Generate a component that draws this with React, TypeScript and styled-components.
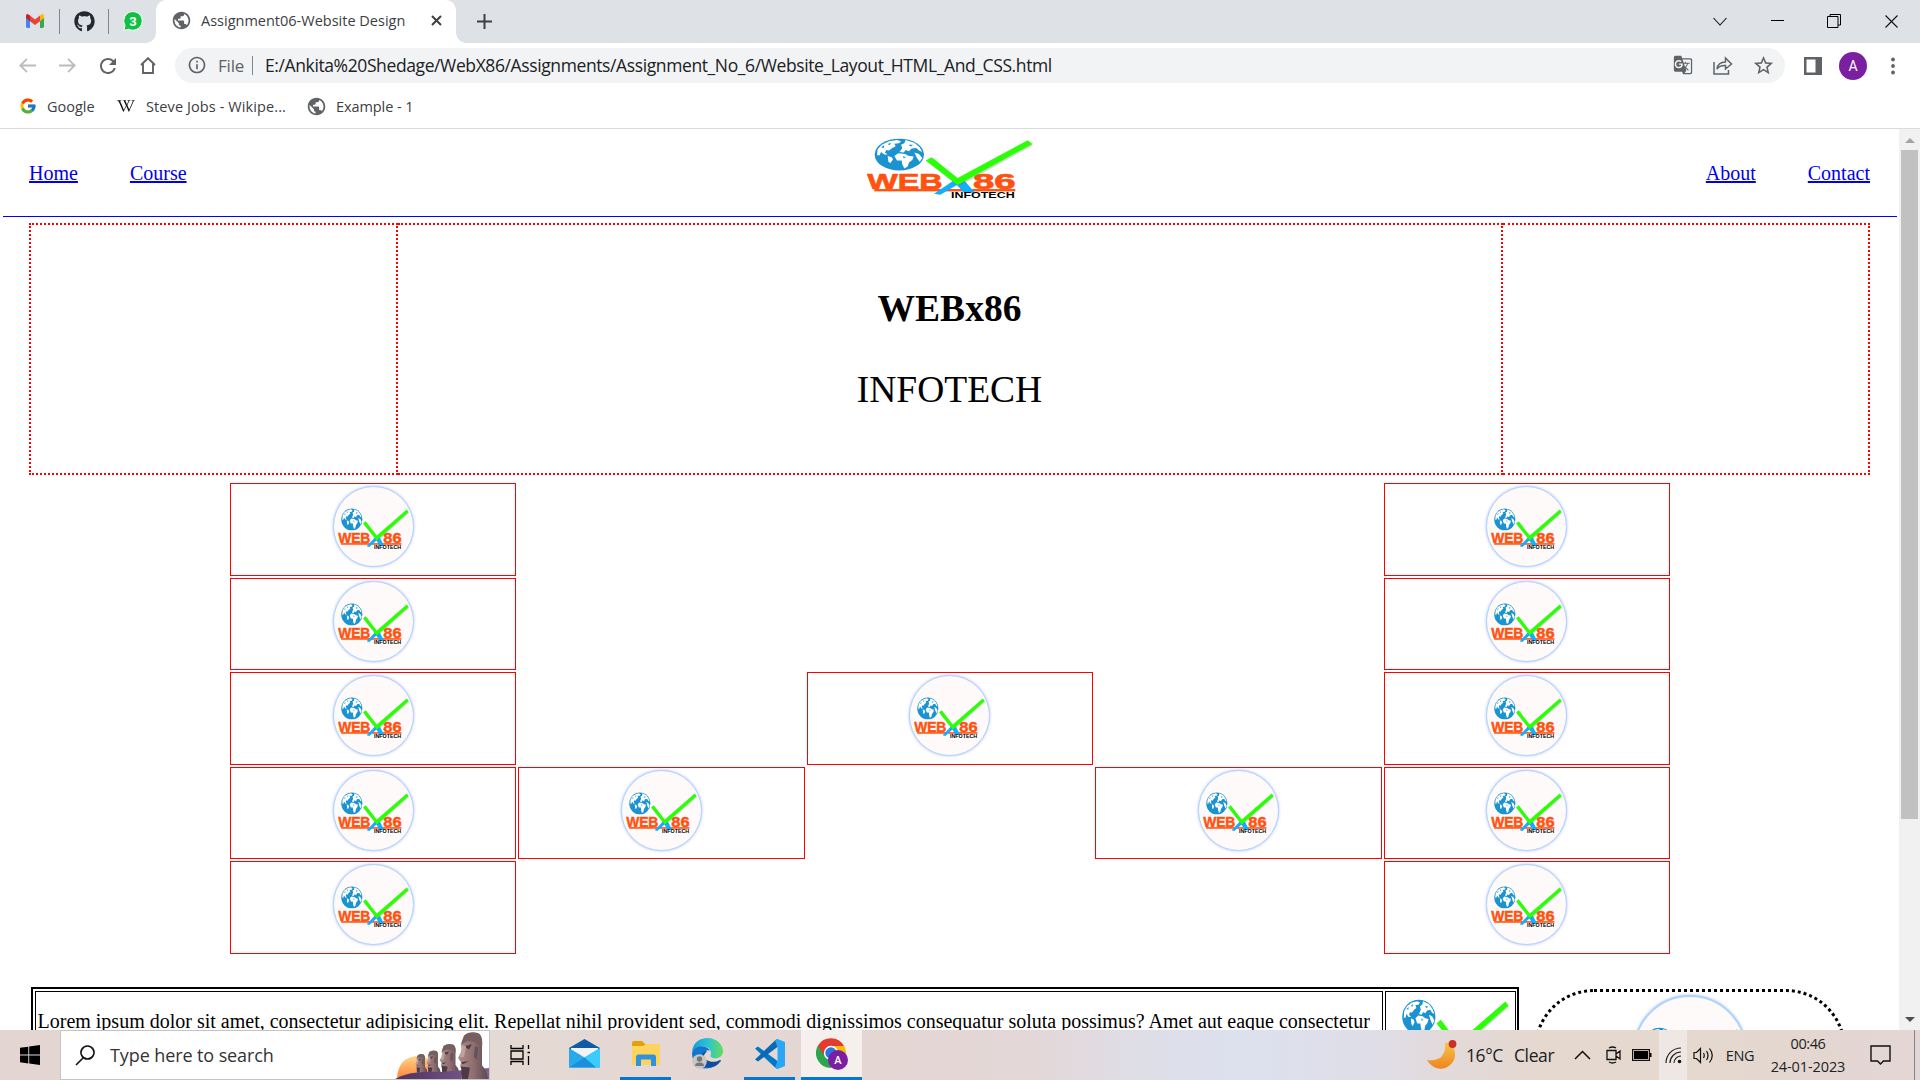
import React from "react";
import styled, { createGlobalStyle } from "styled-components";
import { FaGithub, FaWikipediaW } from "react-icons/fa";
import { FcGoogle } from "react-icons/fc";
import { MdPublic, MdRefresh, MdInfoOutline, MdStarBorder, MdGTranslate } from "react-icons/md";

const serif = `"Liberation Serif", "Times New Roman", serif`;
const sans = `"Open Sans", "Noto Sans", sans-serif`;

const Global = createGlobalStyle`
  *, *::before, *::after { box-sizing: border-box; }
  html, body { margin: 0; padding: 0; background: #fff; overflow: hidden; }
  svg { display: block; flex: none; }
`;

const Screen = styled.div`
  width: 1920px;
  height: 1080px;
  display: flex;
  flex-direction: column;
  overflow: hidden;
  background: #fff;
`;

/* ---------- browser chrome ---------- */

const Row = styled.div<{ $h: number; $pl?: number }>`
  height: ${(p) => p.$h}px;
  padding-left: ${(p) => p.$pl ?? 0}px;
  display: flex;
  align-items: center;
  flex: none;
`;

const TabStrip = styled(Row)`
  background: #dee1e6;
  color: #3c4043;
  padding-bottom: 1px;
`;

const Cell = styled.div<{ $w: number; $bg?: string }>`
  width: ${(p) => p.$w}px;
  height: 100%;
  flex: none;
  display: flex;
  align-items: center;
  justify-content: center;
  background: ${(p) => p.$bg ?? "transparent"};
`;

const Label = styled.span<{ $size: number; $ls?: number; $w?: number; $color?: string }>`
  font-family: ${sans};
  font-size: ${(p) => p.$size}px;
  letter-spacing: ${(p) => p.$ls ?? 0}px;
  width: ${(p) => (p.$w ? `${p.$w}px` : "auto")};
  color: ${(p) => p.$color ?? "#3c4043"};
  white-space: nowrap;
  flex: none;
`;

const Divider = styled.span<{ $h: number }>`
  width: 1px;
  height: ${(p) => p.$h}px;
  background: #80868b;
  flex: none;
`;

const ActiveTab = styled.div`
  position: relative;
  width: 300px;
  height: 43px;
  align-self: flex-start;
  padding-left: 15px;
  display: flex;
  flex: none;
  align-items: center;
  padding-bottom: 2px;
  background: #fff;
  border-radius: 10px 10px 0 0;
  &::before, &::after {
    content: "";
    position: absolute;
    bottom: 0;
    width: 10px;
    height: 10px;
  }
  &::before { left: -10px; background: radial-gradient(circle at 0 0, #dee1e6 9.5px, #fff 10px); }
  &::after { right: -10px; background: radial-gradient(circle at 100% 0, #dee1e6 9.5px, #fff 10px); }
`;

const Push = styled.div`
  flex: 1;
`;

const Toolbar = styled(Row)`
  padding-bottom: 1px;
  color: #5f6368;
`;

const Omnibox = styled.div`
  width: 1610px;
  height: 35px;
  border-radius: 18px;
  background: #f1f3f4;
  display: flex;
  align-items: center;
  padding: 0 2px 1px 12px;
  flex: none;
`;

const Avatar = styled.div`
  width: 28px;
  height: 28px;
  border-radius: 50%;
  background: #7b1fa2;
  color: #fff;
  font: 14px Roboto, sans-serif;
  display: flex;
  align-items: center;
  justify-content: center;
`;

const Bookmarks = styled(Row)`
  padding-bottom: 5px;
  border-bottom: 1px solid #dadce0;
`;

/* ---------- page ---------- */

const Viewport = styled.div`
  height: 901px;
  display: flex;
  overflow: hidden;
  flex: none;
`;

const Page = styled.main`
  width: 1899px;
  height: 901px;
  overflow: hidden;
  font-family: ${serif};
  font-size: 20px;
  color: #000;
`;

const Scrollbar = styled.div`
  width: 21px;
  background: #f1f1f1;
  display: flex;
  flex-direction: column;
  align-items: center;
  padding: 9px 0 8px;
  justify-content: space-between;
`;

const Thumb = styled.div`
  width: 17px;
  height: 669px;
  margin-top: 7px;
  background: #c1c1c1;
`;

const Nav = styled.nav`
  height: 88px;
  margin: 0 2px 6px 3px;
  padding: 0 27px 0 26px;
  border-bottom: 1px solid #00f;
  display: grid;
  grid-template-columns: 1fr 166px 1fr;
  align-items: center;
`;

const Brand = styled.div`
  align-self: start;
  padding-top: 9px;
`;

const Links = styled.div<{ $end?: boolean }>`
  display: flex;
  gap: 52px;
  padding-top: 1px;
  justify-content: ${(p) => (p.$end ? "flex-end" : "flex-start")};
`;

const Link = styled.a`
  color: #00e;
  text-decoration: underline;
  text-decoration-thickness: 2px;
  text-underline-offset: 1px;
`;

const Banner = styled.table`
  width: 1841px;
  height: 252px;
  margin: 0 0 8px 29px;
  border-collapse: collapse;
  table-layout: fixed;
  td {
    border: 2px dotted red;
    padding: 0;
    text-align: center;
    vertical-align: middle;
  }
`;

const Title = styled.h1`
  margin: 0 0 38px;
  font-size: 37.5px;
  line-height: 43px;
`;

const Subtitle = styled.p`
  margin: 0;
  font-size: 37.5px;
  line-height: 43px;
`;

const LogoGrid = styled.section`
  margin: 0 0 33px 230px;
  width: 1440px;
  display: grid;
  grid-template-columns: repeat(5, 1fr);
  grid-template-rows: repeat(5, 92.6px);
  gap: 2px;
`;

const LogoBox = styled.div<{ $col: number; $row: number }>`
  grid-column: ${(p) => p.$col};
  grid-row: ${(p) => p.$row};
  border: 1px solid red;
  display: flex;
  justify-content: center;
  padding-top: 2px;
`;

const Disc = styled.div<{ $d: number }>`
  width: ${(p) => p.$d}px;
  height: ${(p) => p.$d}px;
  border-radius: 50%;
  border: ${(p) => p.$d / 55}px solid #a9d6fb;
  box-shadow: 0 0 3px #b9b9ff;
  background: #fffafa;
  display: flex;
  justify-content: center;
  padding-top: ${(p) => p.$d * 0.26}px;
  flex: none;
`;

const Lower = styled.div`
  display: flex;
  align-items: flex-start;
  padding-left: 31px;
`;

const TextTable = styled.div`
  width: 1488px;
  height: 160px;
  border: 2px solid #000;
  padding: 2px 2px;
  display: grid;
  grid-template-columns: 1348px 131px;
  gap: 2px;
  flex: none;
`;

const TableCell = styled.div`
  border: 1px solid #000;
  overflow: hidden;
  white-space: nowrap;
`;

const Paragraph = styled.p`
  margin: 18px 0 0 1.5px;
  line-height: 23px;
`;

const LogoHolder = styled.div`
  padding: 7px 0 0 11px;
`;

const RoundCard = styled.div`
  width: 312px;
  height: 300px;
  margin: 2px 0 0 15px;
  border: 3px dotted #000;
  border-radius: 60px;
  display: flex;
  justify-content: center;
  align-items: flex-start;
  padding-top: 3px;
`;

/* ---------- taskbar ---------- */

const Taskbar = styled.footer`
  height: 50px;
  display: flex;
  align-items: center;
  flex: none;
  background: linear-gradient(90deg, #e3d5d2 0, #e5d9d4 500px, #e4d6d3 900px, #e3d7d8 1030px, #dddfea 1170px, #dde1ee 1250px, #dfdee8 1370px, #e2d9d9 1450px, #e5d8ce 1550px, #e5d8ce 1700px, #e3d6d4 1920px);
`;

const Search = styled.div`
  width: 430px;
  height: 50px;
  border: 1px solid #c6c3c3;
  background: #fff;
  display: flex;
  align-items: center;
  padding-left: 14px;
  flex: none;
`;

const AppButton = styled.div<{ $w: number; $open?: boolean; $active?: boolean; $ml?: number }>`
  width: ${(p) => p.$w}px;
  margin-left: ${(p) => p.$ml ?? 0}px;
  height: 50px;
  border-bottom: 3px solid ${(p) => (p.$open ? "#0078d7" : "transparent")};
  background: ${(p) => (p.$active ? "#f5f0ee" : "transparent")};
  background-clip: padding-box;
  display: flex;
  align-items: center;
  justify-content: center;
  flex: none;
`;

const Clock = styled.div`
  width: 84px;
  display: flex;
  flex-direction: column;
  align-items: center;
  line-height: 23px;
  flex: none;
`;

/* ---------- drawings ---------- */

const Logo = ({ w, h }: { w: number; h: number }) => (
  <svg width={w} height={h} viewBox="80 40 498 184" preserveAspectRatio="none">
    <ellipse cx="177" cy="90" rx="74" ry="48" fill="#1b93d0" />
    <g fill="#fff">
      <path d="M112 74 L124 60 L146 50 L170 46 L182 50 L176 56 L162 57 L166 65 L156 70 L146 78 L138 76 L134 84 L142 90 L132 90 L122 82 L118 92 L110 92Z" />
      <path d="M196 46 L222 54 L238 68 L246 82 L236 78 L228 70 L214 72 L206 80 L196 76 L190 84 L178 82 L186 70 L182 60 L192 56Z" />
      <path d="M162 94 L174 86 L194 88 L206 94 L220 96 L216 106 L206 114 L202 126 L192 132 L186 120 L184 108 L170 108Z" />
      <path d="M222 84 L236 88 L246 100 L238 112 L230 100Z" />
      <path d="M142 94 L154 98 L158 104 L150 116 L144 110Z" />
    </g>
    <path d="M122 68 L132 62 L130 70Z M142 58 L152 54 L148 62Z M204 60 L218 60 L212 66Z M188 94 L196 98 L190 102Z" fill="#1b93d0" />
    <g fontFamily="'Liberation Sans', Arial, sans-serif" fontWeight="700">
      <text x="81" y="193" fontSize="66" textLength="226" lengthAdjust="spacingAndGlyphs" fill="#ff5210" stroke="#ff5210" strokeWidth="2">WEB</text>
      <text x="398" y="193" fontSize="66" textLength="128" lengthAdjust="spacingAndGlyphs" fill="#ff5210" stroke="#ff5210" strokeWidth="2">86</text>
      <rect x="102" y="194" width="423" height="7" fill="#ff5210" />
      <path d="M281 208 L340 168 L372 168 L404 205 L372 207 L350 182 L300 211Z" fill="#12aeff" />
      <text x="332" y="220" fontSize="25" textLength="191" lengthAdjust="spacingAndGlyphs" fill="#000">INFOTECH</text>
    </g>
    <path d="M262 113 L282 102 L354 170 L564 50 L578 62 L354 187Z" fill="#777" opacity=".3" />
    <path d="M256 108 L274 98 L352 161 L562 47 L576 58 L352 182Z" fill="#2bff06" />
  </svg>
);

const Stroke = ({ w, h, d, color = "#111", sw = 1.3, fill = "none" }: { w: number; h: number; d: string; color?: string; sw?: number; fill?: string }) => (
  <svg width={w} height={h} viewBox={`0 0 ${w} ${h}`} fill={fill} stroke={color} strokeWidth={sw}>
    <path d={d} />
  </svg>
);

const Gmail = () => (
  <svg width="18" height="14" viewBox="0 0 18 14">
    <path d="M0 3V12.6Q0 14 1.4 14H4V5.5Z" fill="#4285f4" />
    <path d="M18 3V12.6Q18 14 16.600 14H14V5.500Z" fill="#34a853" />
    <path d="M14 1.500 15.500.4Q18-.7 18 2.200V4L14 7.300Z" fill="#fbbc04" />
    <path d="M4 7.300 0 4V2.200Q0-.7 2.500.4L4 1.500Z" fill="#c5221f" />
    <path d="M4 1.500 9 5.400 14 1.500V7.300L9 11.100 4 7.300Z" fill="#ea4335" />
  </svg>
);

const WhatsApp = () => (
  <svg width="20" height="20" viewBox="0 0 20 20">
    <path d="M10 .6a9.300 9.300 0 1 1-4.300 17.600L.8 19.400 2 14.700A9.300 9.300 0 0 1 10 .6Z" fill="#0fc143" stroke="#fff" />
    <text x="10" y="14.500" fontSize="13" fontWeight="700" fontFamily="Roboto, sans-serif" fill="#fff" textAnchor="middle">3</text>
  </svg>
);

const SidePanel = () => (
  <svg width="18" height="18" viewBox="0 0 18 18">
    <path d="M0 0H18V18H0ZM2.500 2.500V15.500H11.500V2.500Z" fill="#5f6368" fillRule="evenodd" />
  </svg>
);

const Dots = () => (
  <svg width="4" height="18" viewBox="0 0 4 18" fill="#5f6368">
    <circle cx="2" cy="2.500" r="1.900" /><circle cx="2" cy="9" r="1.900" /><circle cx="2" cy="15.500" r="1.900" />
  </svg>
);

const Windows = () => (
  <svg width="20" height="20" viewBox="0 0 20 20">
    <path d="M0 2.800 8.300 1.700V9.600H0ZM9.200 1.500 20 0V9.600H9.200ZM0 10.500H8.300V18.400L0 17.200ZM9.200 10.500H20V20L9.200 18.500Z" />
  </svg>
);

const Moai = () => (
  <svg width="94" height="48" viewBox="0 0 94 48">
    <defs>
      <linearGradient id="sun" x1="0" y1="0" x2="0" y2="1">
        <stop offset="0" stopColor="#ffd68b" /><stop offset="1" stopColor="#ff8136" />
      </linearGradient>
      <linearGradient id="stone" x1="0" x2="1">
        <stop offset="0" stopColor="#b08c8a" /><stop offset=".55" stopColor="#8c6c6e" /><stop offset="1" stopColor="#5b4854" />
      </linearGradient>
      <linearGradient id="ground" x1="0" x2="1">
        <stop offset="0" stopColor="#4b3160" /><stop offset="1" stopColor="#826094" />
      </linearGradient>
      <g id="head">
        <path d="M4 44 6 36 3 32 4 28 1 24 5 17 4 11 7 3Q13-1 21 1Q26 4 25 13L25 31 29 36 31 44Z" fill="url(#stone)" />
        <path d="M4 11 7 3Q13-2 22 1Q26 4 25 13L18 9 11 8Z" fill="#75605f" />
        <path d="M7 13 15 11 12 16ZM4 28 12 27 6 30ZM4 32 13 33 11 44 5 44Z" fill="#4d3a46" />
        <path d="M18 13 21 14 20 26 17 23Z" fill="#65515b" />
        <path d="M5 12 9 13 7 23 3 23Z" fill="#c5a09b" />
      </g>
    </defs>
    <path d="M2 48Q3 25 24 25Q42 27 46 48Z" fill="url(#sun)" />
    <use href="#head" transform="translate(20 23) scale(.4 .42)" />
    <use href="#head" transform="translate(31 19.500) scale(.48 .52)" />
    <use href="#head" transform="translate(44 13) scale(.66 .68)" />
    <path d="M0 48Q15 39 45 41L70 39 94 37V48Z" fill="url(#ground)" />
    <use href="#head" transform="translate(62 1.500) scale(1 1.060)" />
  </svg>
);

const Mail = () => (
  <svg width="31" height="29" viewBox="0 0 31 29">
    <path d="M0 9 15.500 0 31 9V18H0Z" fill="#0f5ba5" />
    <path d="M2 9H29V17L15.500 23 2 17Z" fill="#f3f3f7" />
    <path d="M0 9 15.500 18.500 31 9V28.500H0Z" fill="#2aa9ea" />
    <path d="M31 9 15.500 18.500 27 28.500H31Z" fill="#3bcdfa" />
    <path d="M0 28.500 15.500 18.500 27 28.500Z" fill="#1791df" />
    <path d="M2 9H29L15.500 17.500Z" fill="#f3f3f7" />
  </svg>
);

const Folder = () => (
  <svg width="28" height="26" viewBox="0 0 28 26">
    <path d="M0 2Q0 0 2 0H10L13 3H26V12H0Z" fill="#e2a00b" />
    <path d="M0 5H11L14 3H26Q28 3 28 5V24H0Z" fill="#ffd45c" />
    <path d="M4 25V16Q4 13.500 6.500 13.500H21.500Q24 13.500 24 16V25H19V18.500H9V25Z" fill="#3291dc" />
  </svg>
);

const Edge = () => (
  <svg width="31" height="31" viewBox="0 0 31 31">
    <defs>
      <linearGradient id="edgeTop" x1="0" x2="1">
        <stop offset="0" stopColor="#179ada" /><stop offset=".5" stopColor="#2bc3d5" /><stop offset="1" stopColor="#63dd58" />
      </linearGradient>
    </defs>
    <path d="M0 14C1 5 7 0 15.500 0 25 0 31 7 31 13 31 19 26 21 21 20 17 19 19 17 19 15 19 10 12 7 7 9 3 10 1 12 0 14Z" fill="url(#edgeTop)" />
    <path d="M0 15C2 7 15 6 18 13 15 11 12 14 12 18 12 25 18 28 24 27 13 35 0 29 0 15Z" fill="#0c78cf" />
    <path d="M12 17C12 23 21 26 28 22Q30 22 28 24C22 32 10 31 9 23 8 17 12 13 15 13Z" fill="#114f9c" />
    <circle cx="7.500" cy="23.500" r="7.300" fill="#c9c6c4" />
    <circle cx="7.500" cy="21" r="2.700" fill="#777" /><path d="M3 28Q3 24.500 7.500 24.500T12 28Z" fill="#777" />
  </svg>
);

const VsCode = () => (
  <svg width="30" height="30" viewBox="0 0 30 30">
    <path d="M0 9.500 3 7.500 22.500 22V30L20 28.500Z" fill="#0077c7" />
    <path d="M0 20.500 3 22.500 22.500 8V0L20 1.500Z" fill="#0a69b2" />
    <path d="M22.500 0 30 3V27L22.500 30 20 28.500 22.500 22V8L20 1.500Z" fill="#2aa7f4" />
  </svg>
);

const Chrome = () => (
  <svg width="32" height="32" viewBox="0 0 32 32">
    <path d="M15 15 28 7.500A15 15 0 0 1 15 30Z" fill="#fbbc05" />
    <path d="M15 15V30A15 15 0 0 1 2 7.500Z" fill="#2da44e" />
    <path d="M15 8H28L21 19Z" fill="#fbbc05" />
    <path d="M2 7.500 9 19 15 8H28A15 15 0 0 0 2 7.500Z" fill="#e33b2e" />
    <circle cx="15" cy="15" r="7.200" fill="#fff" /><circle cx="15" cy="15" r="5.700" fill="#2b73e8" />
    <circle cx="22" cy="22" r="10" fill="#7b1fa2" />
    <text x="22" y="26" fontSize="11" fontWeight="500" fontFamily="Roboto, sans-serif" fill="#fff" textAnchor="middle">A</text>
  </svg>
);

const Moon = () => (
  <svg width="30" height="30" viewBox="0 0 30 30">
    <defs>
      <linearGradient id="moon" x1="0" y1="0" x2="0" y2="1">
        <stop offset="0" stopColor="#f7c64a" /><stop offset="1" stopColor="#ee8420" />
      </linearGradient>
    </defs>
    <path d="M18 2Q29 5 28 16C27 27 10 36 0 20Q20 22 18 2Z" fill="url(#moon)" />
    <circle cx="25.500" cy="4" r="3.900" fill="#cc2f26" />
  </svg>
);

const Wifi = () => (
  <svg width="17" height="17" viewBox="0 0 17 17" fill="none" stroke="#222" strokeWidth="1.200">
    <path d="M1 16A15 15 0 0 1 16 1M5 16A11 11 0 0 1 16 5M9 16A7 7 0 0 1 16 9" />
    <circle cx="14.500" cy="14.500" r="1.800" fill="#111" stroke="none" />
  </svg>
);

const columns: [number, number][] = [
  [1, 1], [5, 1], [1, 2], [5, 2], [1, 3], [3, 3], [5, 3],
  [1, 4], [2, 4], [4, 4], [5, 4], [1, 5], [5, 5],
];

export default function App() {
  return (
    <Screen>
      <Global />
      <TabStrip $h={43} $pl={10}>
        <Cell $w={49}><Gmail /></Cell>
        <Divider $h={25} />
        <Cell $w={48}><FaGithub size={21} color="#24292f" /></Cell>
        <Divider $h={25} />
        <Cell $w={47}><WhatsApp /></Cell>
        <ActiveTab>
          <MdPublic size={21} color="#5f6368" />
          <Cell $w={9} />
          <Label $size={14.5} $w={224}>Assignment06-Website Design</Label>
          <Cell $w={22}><Stroke w={11} h={11} d="M1 1 10 10M10 1 1 10" color="#3c4043" sw={2} /></Cell>
        </ActiveTab>
        <Cell $w={56}><Stroke w={15} h={15} d="M7.5 0V15M0 7.5H15" color="#3c4043" sw={2} /></Cell>
        <Push />
        <Cell $w={56}><Stroke w={14} h={9} d="M.5 1 7 8 13.5 1" sw={1.1} /></Cell>
        <Cell $w={58}><Stroke w={13} h={2} d="M0 .5H13" sw={1} color="#000" /></Cell>
        <Cell $w={56}><Stroke w={14} h={14} d="M.5 2.500H11V13.500H.5ZM3 2.500V.5H13.500V11H11" sw={1} color="#000" /></Cell>
        <Cell $w={58}><Stroke w={13} h={13} d="M.5.5 12.500 12.500M12.500.5.5 12.500" sw={1.1} /></Cell>
      </TabStrip>

      <Toolbar $h={46} $pl={7}>
        <Cell $w={41}><Stroke w={17} h={15} d="M17 7.500H1.500M8 .8 1.300 7.500 8 14.200" color="#babcbe" sw={1.8} /></Cell>
        <Cell $w={39}><Stroke w={17} h={15} d="M0 7.500H15.500M9 .8 15.700 7.500 9 14.200" color="#babcbe" sw={1.8} /></Cell>
        <Cell $w={41}><MdRefresh size={24} /></Cell>
        <Cell $w={39}><Stroke w={16} h={17} d="M1 8 8 1.200 15 8M3 7V16H13V7" color="#5f6368" sw={1.9} /></Cell>
        <Cell $w={8} />
        <Omnibox>
          <MdInfoOutline size={20} />
          <Cell $w={11} />
          <Label $size={17} $ls={-0.2} $w={34} $color="#5f6368">File</Label>
          <Divider $h={19} />
          <Cell $w={12} />
          <Label $size={17.5} $ls={-0.39} $color="#202124">E:/Ankita%20Shedage/WebX86/Assignments/Assignment_No_6/Website_Layout_HTML_And_CSS.html</Label>
          <Push />
          <Cell $w={40}><MdGTranslate size={20} /></Cell>
          <Cell $w={40}><Stroke w={20} h={19} d="M1 6V18H15.500V14M4 13Q5 6 12.500 6V2L18.500 8 12.500 13V9.500Q7 9 4 13Z" color="#5f6368" sw={1.5} /></Cell>
          <Cell $w={40}><MdStarBorder size={23} /></Cell>
        </Omnibox>
        <Cell $w={8} />
        <Cell $w={40}><SidePanel /></Cell>
        <Cell $w={40}><Avatar>A</Avatar></Cell>
        <Cell $w={39}><Dots /></Cell>
      </Toolbar>

      <Bookmarks $h={40} $pl={19}>
        <FcGoogle size={18} />
        <Cell $w={10} />
        <Label $size={14.5} $w={70}>Google</Label>
        <FaWikipediaW size={18} color="#111" />
        <Cell $w={11} />
        <Label $size={14.5} $ls={0.1} $w={160}>Steve Jobs - Wikipe...</Label>
        <MdPublic size={21} color="#5f6368" />
        <Cell $w={9} />
        <Label $size={14.5} $ls={-0.08}>Example - 1</Label>
      </Bookmarks>

      <Viewport>
        <Page>
          <Nav>
            <Links>
              <Link>Home</Link>
              <Link>Course</Link>
            </Links>
            <Brand><Logo w={166} h={61} /></Brand>
            <Links $end>
              <Link>About</Link>
              <Link>Contact</Link>
            </Links>
          </Nav>
          <Banner>
            <colgroup>
              <col style={{ width: 367 }} />
              <col />
              <col style={{ width: 367 }} />
            </colgroup>
            <tbody>
              <tr>
                <td />
                <td>
                  <Title>WEBx86</Title>
                  <Subtitle>INFOTECH</Subtitle>
                </td>
                <td />
              </tr>
            </tbody>
          </Banner>
          <LogoGrid>
            {columns.map(([c, r]) => (
              <LogoBox key={`${c}-${r}`} $col={c} $row={r}>
                <Disc $d={81}><Logo w={71} h={42} /></Disc>
              </LogoBox>
            ))}
          </LogoGrid>
          <Lower>
            <TextTable>
              <TableCell>
                <Paragraph>
                  Lorem ipsum dolor sit amet, consectetur adipisicing elit. Repellat nihil provident sed, commodi dignissimos consequatur soluta possimus? Amet aut eaque consectetur
                </Paragraph>
              </TableCell>
              <TableCell>
                <LogoHolder><Logo w={112} h={66} /></LogoHolder>
              </TableCell>
            </TextTable>
            <RoundCard>
              <Disc $d={114}><Logo w={100} h={59} /></Disc>
            </RoundCard>
          </Lower>
        </Page>
        <Scrollbar>
          <div>
            <Stroke w={10} h={5} d="M5 0 10 5H0Z" color="none" fill="#a3a3a3" />
          </div>
          <Thumb />
          <Push />
          <div>
            <Stroke w={10} h={5} d="M0 0H10L5 5Z" color="none" fill="#505050" />
          </div>
        </Scrollbar>
      </Viewport>

      <Taskbar>
        <Cell $w={60}><Windows /></Cell>
        <Search>
          <Stroke w={21} h={21} d="M1 20 8.500 12.500M12.500 1A6.500 6.500 0 1 1 12.490 1Z" sw={1.6} />
          <Cell $w={14} />
          <Label $size={18} $ls={-0.1} $color="#333">Type here to search</Label>
          <Push />
          <Moai />
        </Search>
        <Cell $w={61}>
          <Stroke w={21} h={20} d="M1 0V3.500H13V0M1 6H13V14H1ZM1 20V16.500H13V20M18.500 0V4M18.500 11V20M17.500 7.500H20" sw={1.3} color="#000" />
        </Cell>
        <AppButton $w={62} $ml={2}><Mail /></AppButton>
        <AppButton $w={51} $ml={5} $open><Folder /></AppButton>
        <AppButton $w={62} $ml={5}><Edge /></AppButton>
        <AppButton $w={51} $ml={6} $open><VsCode /></AppButton>
        <AppButton $w={61} $ml={6} $open $active><Chrome /></AppButton>
        <Push />
        <Moon />
        <Cell $w={9} />
        <Label $size={17.5} $ls={-0.4} $w={48} $color="#222">16°C</Label>
        <Label $size={17.5} $ls={-0.4} $w={48} $color="#222">Clear</Label>
        <Cell $w={40}><Stroke w={17} h={10} d="M1 9 8.500 1.500 16 9" sw={1.5} /></Cell>
        <Cell $w={22}><Stroke w={15} h={18} d="M1 4.500H10V13.500H1ZM10 8 14 5V13L10 10M3 2Q6.500 0 10 2M3 16Q6.500 18 10 16" sw={1.3} /></Cell>
        <Cell $w={35}>
          <svg width="20" height="12" viewBox="0 0 20 12">
            <rect x=".6" y=".6" width="16.800" height="10.800" fill="none" stroke="#111" strokeWidth="1.200" />
            <rect x="2" y="2" width="14" height="8" /><rect x="18" y="4" width="1.500" height="4" />
          </svg>
        </Cell>
        <Cell $w={28} $bg="#efe7e3"><Wifi /></Cell>
        <Cell $w={32}><Stroke w={21} h={17} d="M1 5.500H3.500L7.500 1.500V15.500L3.500 11.500H1ZM10.500 6Q12 8.500 10.500 11M13.500 4Q16.500 8.500 13.500 13M16.500 1.500Q22 8.500 16.500 15.500" sw={1.2} /></Cell>
        <Cell $w={42}><Label $size={14.5} $ls={-0.3} $color="#222">ENG</Label></Cell>
        <Cell $w={5} />
        <Clock>
          <Label $size={14.5} $ls={-0.4} $color="#222">00:46</Label>
          <Label $size={14.5} $ls={-0.1} $color="#222">24-01-2023</Label>
        </Clock>
        <Cell $w={60}><Stroke w={21} h={20} d="M1 1H20V16H13.500L10.500 19 7.500 16H1Z" sw={1.4} /></Cell>
        <Cell $w={4} />
        <Divider $h={50} />
        <Cell $w={5} />
      </Taskbar>
    </Screen>
  );
}
